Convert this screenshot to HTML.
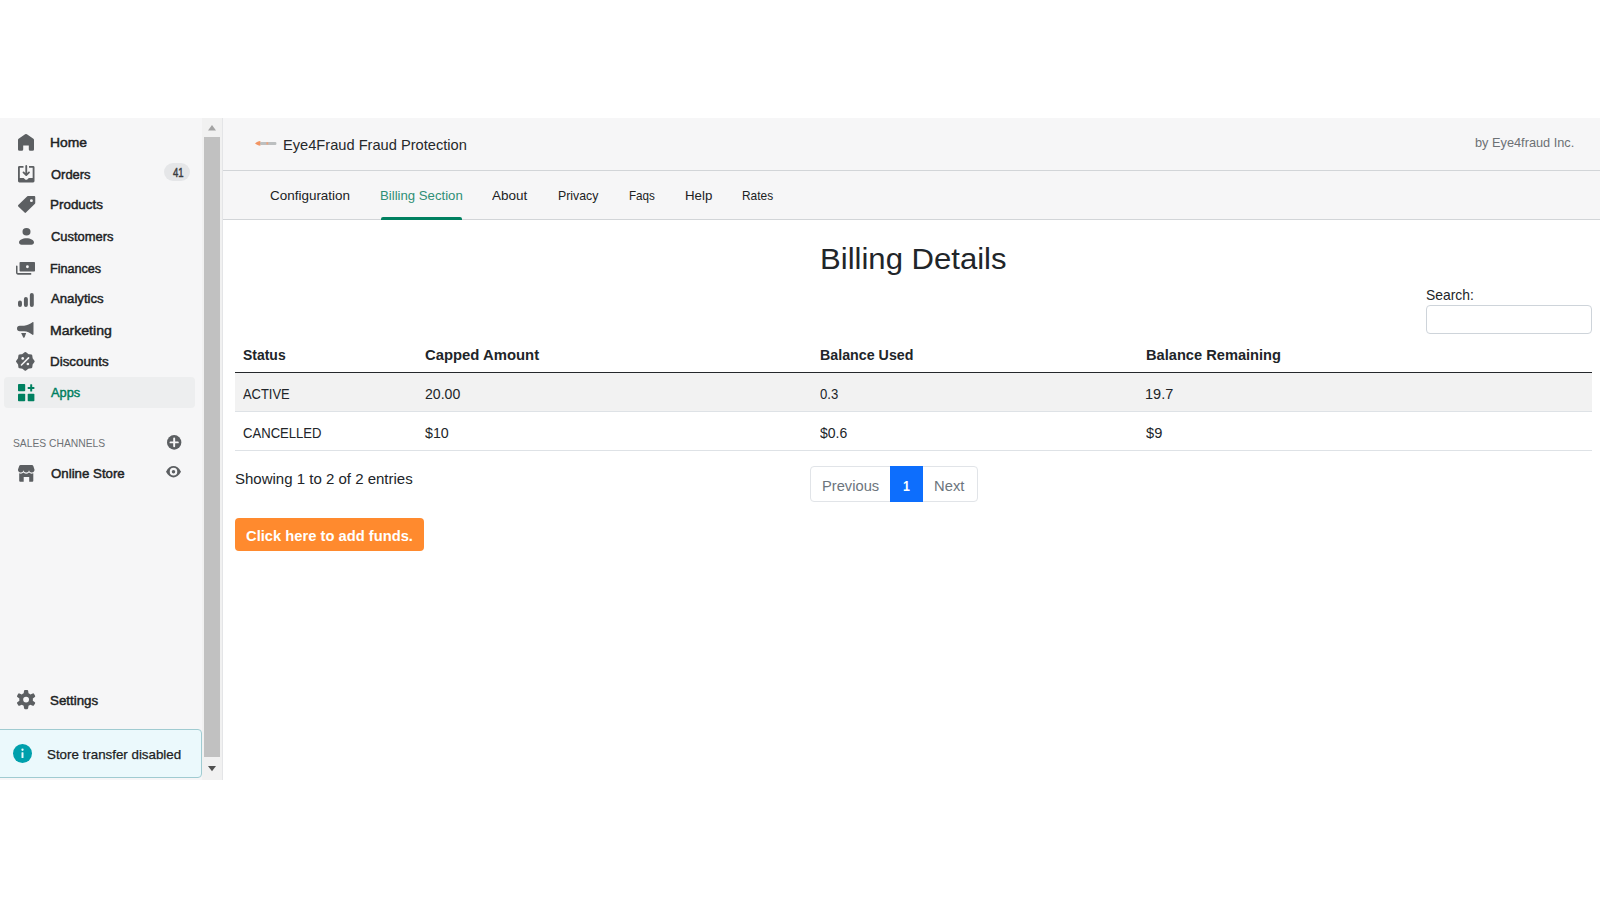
<!DOCTYPE html>
<html lang="en"><head><meta charset="utf-8"><title>Eye4Fraud Fraud Protection</title>
<style>
html,body{margin:0;padding:0;background:#fff;width:1600px;height:900px;overflow:hidden}
body{font-family:"Liberation Sans",sans-serif}
#app{position:relative;width:1600px;height:900px;overflow:hidden}
.t{position:absolute;white-space:nowrap;line-height:1;transform-origin:0 50%;font-family:"Liberation Sans",sans-serif}
.b{position:absolute;box-sizing:border-box}
svg{position:absolute;overflow:visible}

</style></head>
<body>
<div id="app">
<!-- app chrome backgrounds -->
<div class="b" style="left:0;top:118px;width:1600px;height:102px;background:#f6f6f7"></div>
<div class="b" style="left:0;top:118px;width:223px;height:662px;background:#f6f6f7"></div>
<!-- scrollbar -->
<div class="b" style="left:202px;top:118px;width:21px;height:662px;background:#f1f1f1"></div>
<div class="b" style="left:222px;top:118px;width:1px;height:662px;background:#e4e5e7"></div>
<div class="b" style="left:204.4px;top:137px;width:15.3px;height:620.2px;background:#c1c1c1"></div>
<svg style="left:208px;top:124.5px" width="8" height="5.5" viewBox="0 0 8 5.5"><path d="M4 0L8 5.5H0z" fill="#a3a3a3"/></svg>
<svg style="left:208.4px;top:765.5px" width="8" height="5.2" viewBox="0 0 8 5.2"><path d="M0 0H8L4 5.2z" fill="#505050"/></svg>
<!-- header dividers -->
<div class="b" style="left:223px;top:170px;width:1377px;height:1px;background:#d2d5d8"></div>
<div class="b" style="left:223px;top:219px;width:1377px;height:1px;background:#d2d5d8"></div>
<div class="b" style="left:380.6px;top:217.4px;width:81.4px;height:2.8px;background:#008060;border-radius:2px 2px 0 0"></div>
<!-- Apps highlight -->
<div class="b" style="left:4.3px;top:377.3px;width:190.7px;height:30.4px;background:#edeeef;border-radius:4px"></div>
<!-- Orders badge -->
<div class="b" style="left:164.2px;top:162.8px;width:26.3px;height:18.2px;background:#e5e6e8;border-radius:9.1px"></div>
<!-- banner -->
<div class="b" style="left:-4px;top:729px;width:206px;height:49px;background:#ebf9fc;border:1px solid #a0cbd1;border-radius:4px"></div>
<!-- search input -->
<div class="b" style="left:1426px;top:305px;width:166px;height:29px;background:#fff;border:1px solid #ced4da;border-radius:4px"></div>
<!-- table -->
<div class="b" style="left:235px;top:373px;width:1357px;height:38px;background:#f2f2f2"></div>
<div class="b" style="left:235px;top:371.6px;width:1357px;height:1.9px;background:#25282c"></div>
<div class="b" style="left:235px;top:411px;width:1357px;height:1px;background:#dee2e6"></div>
<div class="b" style="left:235px;top:450px;width:1357px;height:1px;background:#dee2e6"></div>
<!-- pagination -->
<div class="b" style="left:810px;top:466px;width:168px;height:36px;background:#fff;border:1px solid #e1e4e8;border-radius:4px"></div>
<div class="b" style="left:890px;top:466px;width:33px;height:36px;background:#0d6efd"></div>
<!-- button -->
<div class="b" style="left:235.2px;top:518px;width:188.8px;height:33.3px;background:#ff8a2e;border-radius:4px"></div>

<svg style="left:18.00px;top:133.75px" width="16.00" height="16.85" viewBox="2.000 1.000 16.000 18.000" preserveAspectRatio="none"><path fill="#5c5f62" d="M18 7.3V17.5A1.5 1.5 0 0 1 16.5 19H14.3A1.5 1.5 0 0 1 12.8 17.5V13.2H7.2V17.5A1.5 1.5 0 0 1 5.7 19H3.5A1.5 1.5 0 0 1 2 17.5V7.3A1.5 1.5 0 0 1 2.6 6.1L9.1 1.3A1.5 1.5 0 0 1 10.9 1.3L17.4 6.1A1.5 1.5 0 0 1 18 7.3Z"/></svg>
<svg style="left:17.50px;top:165.00px" width="16.50" height="17.50" viewBox="1.000 0.000 18.000 19.000" preserveAspectRatio="none"><path fill="#5c5f62" d="M11 1a1 1 0 1 0-2 0v7.586L7.707 7.293a1 1 0 0 0-1.414 1.414l3 3a1 1 0 0 0 1.414 0l3-3a1 1 0 0 0-1.414-1.414L11 8.586V1z"/><path fill="#5c5f62" d="M3 14V3h4V1H2.5A1.5 1.5 0 0 0 1 2.5v15A1.5 1.5 0 0 0 2.5 19h15a1.5 1.5 0 0 0 1.5-1.5v-15A1.5 1.5 0 0 0 17.500 1H13v2h4v11h-3.500c-.775 0-1.388.662-1.926 1.244l-.11.12A1.994 1.994 0 0 1 10 16a1.994 1.994 0 0 1-1.463-.637l-.111-.12C7.888 14.664 7.275 14 6.500 14H3z"/></svg>
<svg style="left:17.50px;top:196.25px" width="17.25" height="16.85" viewBox="0.000 1.000 18.000 18.000" preserveAspectRatio="none"><path fill="#5c5f62" fill-rule="evenodd" d="M10.408 1H17a1 1 0 0 1 1 1v6.592a1 1 0 0 1-.293.707l-9.408 9.408a1 1 0 0 1-1.414 0L.293 12.115a1 1 0 0 1 0-1.414L9.701 1.293A1 1 0 0 1 10.408 1zM14 7.500a1.500 1.500 0 1 0 0-3 1.500 1.500 0 0 0 0 3z"/></svg>
<svg style="left:18.50px;top:228.30px" width="15.00" height="16.70" viewBox="2.500 1.100 15.000 17.900" preserveAspectRatio="none"><path fill="#5c5f62" d="M14 5.100a4 4 0 1 1-8 0 4 4 0 0 1 8 0zM2.500 16.500C2.500 14 6 12 10 12s7.500 2 7.500 4.500c0 1.400-1 2.500-2.500 2.500H5c-1.500 0-2.500-1.100-2.500-2.500z"/></svg>
<svg style="left:16.25px;top:262.10px" width="19.00" height="12.65" viewBox="0.000 0.000 18.800 12.500" preserveAspectRatio="none"><path fill="#5c5f62" fill-rule="evenodd" d="M4.300 0H18a.8.8 0 0 1 .8.800V8.600a.8.8 0 0 1-.8.800H4.300a.8.800 0 0 1-.8-.8V.8A.8.800 0 0 1 4.300 0zM11.300 6.100a1.400 1.400 0 1 0 0-2.800 1.400 1.400 0 0 0 0 2.800z"/><path fill="none" stroke="#5c5f62" stroke-width="1.500" stroke-linecap="round" stroke-linejoin="round" d="M.75 4.300V10.750a1 1 0 0 0 1 1H14.500"/></svg>
<svg style="left:18.00px;top:292.50px" width="15.80" height="14.10" viewBox="0.000 0.000 16.000 14.000" preserveAspectRatio="none"><path fill="#5c5f62" d="M14 0a2 2 0 0 0-2 2v10a2 2 0 0 0 4 0V2a2 2 0 0 0-2-2zM8 4a2 2 0 0 0-2 2v6a2 2 0 0 0 4 0V6a2 2 0 0 0-2-2zM2 7.500a2 2 0 0 0-2 2V12a2 2 0 0 0 4 0V9.500a2 2 0 0 0-2-2z"/></svg>
<svg style="left:17.30px;top:322.30px" width="16.50" height="15.80" viewBox="-0.000 0.045 16.403 15.822" preserveAspectRatio="none"><path fill="#5c5f62" d="M0 6.500A2.800 2.800 0 0 1 2.800 3.700H7C10 3.500 13 2 15.400.200a.6.600 0 0 1 1 .500V12.300a.6.600 0 0 1-1 .500C13 11 10 9.600 7 9.400H2.800A2.800 2.800 0 0 1 0 6.600z"/><path fill="#5c5f62" d="M4.100 11.100H9.100L7.600 15.400a.8.800 0 0 1-1.400.100z"/></svg>
<svg style="left:16.30px;top:352.00px" width="18.70" height="18.70" viewBox="0.400 0.400 19.200 19.200" preserveAspectRatio="none"><polygon fill="#5c5f62" stroke="#5c5f62" stroke-width="2.4" stroke-linejoin="round" points="10.00,1.60 12.64,3.63 15.94,4.06 16.37,7.36 18.40,10.00 16.37,12.64 15.94,15.94 12.64,16.37 10.00,18.40 7.36,16.37 4.06,15.94 3.63,12.64 1.60,10.00 3.63,7.36 4.06,4.06 7.36,3.63"/><path stroke="#f6f6f7" stroke-width="1.600" stroke-linecap="round" d="M6 13.700L13.300 6.400"/><circle cx="7.300" cy="7" r="1.350" fill="#f6f6f7"/><circle cx="12.600" cy="12.700" r="1.350" fill="#f6f6f7"/></svg>
<svg style="left:17.50px;top:384.40px" width="16.40" height="17.20" viewBox="0.000 0.000 16.400 17.200" preserveAspectRatio="none"><rect x="0" y="0" width="7.200" height="7.200" rx=".8" fill="#008060"/><rect x="0" y="9.700" width="7.200" height="7.500" rx=".8" fill="#008060"/><rect x="9.700" y="9.700" width="6.700" height="7.500" rx=".8" fill="#008060"/><rect x="9.700" y="3" width="6.700" height="2" rx=".5" fill="#008060"/><rect x="12.200" y=".3" width="2" height="7.200" rx=".5" fill="#008060"/></svg>
<svg style="left:17.50px;top:464.75px" width="16.50" height="16.75" viewBox="-0.004 0.000 16.508 16.700" preserveAspectRatio="none"><path fill="#5c5f62" d="M2.600 0H13.900a1.500 1.500 0 0 1 1.400 1L16.500 4.500a2.750 2.750 0 0 1-5.500.3 2.750 2.750 0 0 1-5.500 0 2.750 2.750 0 0 1-5.500-.3L1.200 1A1.500 1.500 0 0 1 2.600 0z"/><path fill="#5c5f62" d="M1.200 8.300a4 4 0 0 0 4.300-.700 4.200 4.200 0 0 0 5.500 0 4 4 0 0 0 4.300.7V15.700a1 1 0 0 1-1 1H11.200V12H5.700v4.700H2.200a1 1 0 0 1-1-1z"/></svg>
<svg style="left:166.90px;top:435.00px" width="14.35" height="14.75" viewBox="0.000 0.000 14.800 14.800" preserveAspectRatio="none"><circle cx="7.400" cy="7.400" r="7.400" fill="#5c5f62"/><path stroke="#f6f6f7" stroke-width="2" stroke-linecap="round" d="M3.600 7.400H11.200M7.400 3.600V11.200"/></svg>
<svg style="left:166.30px;top:466.10px" width="15.00" height="11.40" viewBox="0.000 -0.000 14.800 11.000" preserveAspectRatio="none"><path fill="#5c5f62" fill-rule="evenodd" d="M0 5.500C2 1.600 4.800 0 7.400 0s5.400 1.600 7.400 5.500C12.800 9.400 10 11 7.400 11S2 9.400 0 5.500zM7.400 9.200a3.700 3.700 0 1 0 0-7.400 3.700 3.700 0 0 0 0 7.400z"/><circle cx="7.400" cy="5.500" r="1.700" fill="#5c5f62"/></svg>
<svg style="left:17.00px;top:690.00px" width="18.20" height="19.20" viewBox="0.800 0.000 18.721 20.000" preserveAspectRatio="none"><path fill="#5c5f62" fill-rule="evenodd" d="M9.027 0a1 1 0 0 0-.99.859l-.37 2.598A6.993 6.993 0 0 0 5.742 4.570l-2.437-.98a1 1 0 0 0-1.239.428L.934 5.981a1 1 0 0 0 .248 1.287l2.066 1.621a7.060 7.060 0 0 0 0 2.222l-2.066 1.621a1 1 0 0 0-.248 1.287l1.132 1.962a1 1 0 0 0 1.239.428l2.438-.979a6.995 6.995 0 0 0 1.923 1.113l.372 2.598a1 1 0 0 0 .99.859h2.265a1 1 0 0 0 .99-.859l.371-2.598a6.995 6.995 0 0 0 1.924-1.112l2.438.978a1 1 0 0 0 1.238-.428l1.133-1.962a1 1 0 0 0-.249-1.287l-2.065-1.621a7.063 7.063 0 0 0 0-2.222l2.065-1.621a1 1 0 0 0 .249-1.287l-1.133-1.962a1 1 0 0 0-1.239-.428l-2.437.979a6.994 6.994 0 0 0-1.924-1.113L12.283.860a1 1 0 0 0-.99-.859H9.027zM10.160 13a3 3 0 1 0 0-6 3 3 0 0 0 0 6z"/></svg>
<svg style="left:12.90px;top:744.30px" width="19.00" height="19.10" viewBox="0.000 0.000 19.000 19.000" preserveAspectRatio="none"><circle cx="9.500" cy="9.500" r="9.500" fill="#00a0ac"/><circle cx="9.500" cy="5.700" r="1.150" fill="#ebf9fc"/><rect x="8.500" y="8.200" width="2" height="5.800" rx=".6" fill="#ebf9fc"/></svg>
<svg style="left:254.80px;top:141.20px" width="21.40" height="4.80" viewBox="0.000 0.000 21.200 4.800" preserveAspectRatio="none"><path fill="#f29563" d="M0 2.400C1.500 1.200 3.500.300 5.300 0V4.800C3.500 4.500 1.500 3.600 0 2.400z"/><rect x="5" y="1.100" width="16.200" height="2.800" rx="1" fill="#a4a8a8" opacity=".7"/><rect x="11.300" y="1.300" width="1.800" height="2.200" fill="#f0a27a"/></svg>
<span class="t" style="left:49.55px;top:136px;font-size:13.2px;font-weight:400;color:#202223;-webkit-text-stroke:0.45px #202223;transform:scaleX(1.0519)">Home</span>
<span class="t" style="left:50.60px;top:168px;font-size:13.2px;font-weight:400;color:#202223;-webkit-text-stroke:0.45px #202223;transform:scaleX(0.9826)">Orders</span>
<span class="t" style="left:49.58px;top:198px;font-size:13.2px;font-weight:400;color:#202223;-webkit-text-stroke:0.45px #202223;transform:scaleX(1.0185)">Products</span>
<span class="t" style="left:50.60px;top:230px;font-size:13.2px;font-weight:400;color:#202223;-webkit-text-stroke:0.45px #202223;transform:scaleX(0.9803)">Customers</span>
<span class="t" style="left:49.64px;top:262px;font-size:13.2px;font-weight:400;color:#202223;-webkit-text-stroke:0.45px #202223;transform:scaleX(0.9562)">Finances</span>
<span class="t" style="left:50.60px;top:292px;font-size:13.2px;font-weight:400;color:#202223;-webkit-text-stroke:0.45px #202223;transform:scaleX(0.9986)">Analytics</span>
<span class="t" style="left:49.53px;top:324px;font-size:13.2px;font-weight:400;color:#202223;-webkit-text-stroke:0.45px #202223;transform:scaleX(1.0678)">Marketing</span>
<span class="t" style="left:49.59px;top:355px;font-size:13.2px;font-weight:400;color:#202223;-webkit-text-stroke:0.45px #202223;transform:scaleX(1.0138)">Discounts</span>
<span class="t" style="left:50.60px;top:386px;font-size:13.2px;font-weight:400;color:#007f5f;-webkit-text-stroke:0.45px #007f5f;transform:scaleX(0.9716)">Apps</span>
<span class="t" style="left:172.60px;top:167px;font-size:12.0px;font-weight:400;color:#3a3d40;-webkit-text-stroke:0.45px #3a3d40;transform:scaleX(0.7971)">41</span>
<span class="t" style="left:12.90px;top:438px;font-size:11.2px;font-weight:400;color:#6d7175;transform:scaleX(0.9213)">SALES CHANNELS</span>
<span class="t" style="left:50.60px;top:467px;font-size:13.2px;font-weight:400;color:#202223;-webkit-text-stroke:0.45px #202223;transform:scaleX(1.0059)">Online Store</span>
<span class="t" style="left:50.40px;top:694px;font-size:13.2px;font-weight:400;color:#202223;-webkit-text-stroke:0.45px #202223;transform:scaleX(1.0092)">Settings</span>
<span class="t" style="left:46.70px;top:748px;font-size:13.4px;font-weight:400;color:#202223;-webkit-text-stroke:0.25px #202223;transform:scaleX(0.9957)">Store transfer disabled</span>
<span class="t" style="left:283.21px;top:138px;font-size:14.8px;font-weight:400;color:#26292b;transform:scaleX(0.9889)">Eye4Fraud Fraud Protection</span>
<span class="t" style="left:1474.50px;top:136px;font-size:13.0px;font-weight:400;color:#6d7175;transform:scaleX(0.9815)">by Eye4fraud Inc.</span>
<span class="t" style="left:270.30px;top:189px;font-size:13.2px;font-weight:400;color:#202223;transform:scaleX(1.0204)">Configuration</span>
<span class="t" style="left:492.40px;top:189px;font-size:13.2px;font-weight:400;color:#202223;transform:scaleX(1.0230)">About</span>
<span class="t" style="left:557.67px;top:189px;font-size:13.2px;font-weight:400;color:#202223;transform:scaleX(0.9334)">Privacy</span>
<span class="t" style="left:628.72px;top:189px;font-size:13.2px;font-weight:400;color:#202223;transform:scaleX(0.8843)">Faqs</span>
<span class="t" style="left:684.99px;top:189px;font-size:13.2px;font-weight:400;color:#202223;transform:scaleX(1.0082)">Help</span>
<span class="t" style="left:742.10px;top:189px;font-size:13.2px;font-weight:400;color:#202223;transform:scaleX(0.9038)">Rates</span>
<span class="t" style="left:379.60px;top:189px;font-size:13.2px;font-weight:400;color:#2f8f76;transform:scaleX(0.9988)">Billing Section</span>
<span class="t" style="left:820.41px;top:244px;font-size:29.8px;font-weight:400;color:#212529;transform:scaleX(1.0429)">Billing Details</span>
<span class="t" style="left:1426.25px;top:288px;font-size:14.8px;font-weight:400;color:#212529;transform:scaleX(0.9372)">Search:</span>
<span class="t" style="left:242.75px;top:348px;font-size:14.7px;font-weight:700;color:#212529;transform:scaleX(0.9504)">Status</span>
<span class="t" style="left:424.75px;top:348px;font-size:14.7px;font-weight:700;color:#212529;transform:scaleX(1.0108)">Capped Amount</span>
<span class="t" style="left:820.00px;top:348px;font-size:14.7px;font-weight:700;color:#212529;transform:scaleX(0.9700)">Balance Used</span>
<span class="t" style="left:1146.00px;top:348px;font-size:14.7px;font-weight:700;color:#212529;transform:scaleX(0.9961)">Balance Remaining</span>
<span class="t" style="left:242.75px;top:387px;font-size:14.9px;font-weight:400;color:#212529;transform:scaleX(0.8681)">ACTIVE</span>
<span class="t" style="left:424.75px;top:387px;font-size:14.9px;font-weight:400;color:#212529;transform:scaleX(0.9464)">20.00</span>
<span class="t" style="left:820.00px;top:387px;font-size:14.9px;font-weight:400;color:#212529;transform:scaleX(0.8816)">0.3</span>
<span class="t" style="left:1145.03px;top:387px;font-size:14.9px;font-weight:400;color:#212529;transform:scaleX(0.9747)">19.7</span>
<span class="t" style="left:242.75px;top:426px;font-size:14.9px;font-weight:400;color:#212529;transform:scaleX(0.8787)">CANCELLED</span>
<span class="t" style="left:424.75px;top:426px;font-size:14.9px;font-weight:400;color:#212529;transform:scaleX(0.9567)">$10</span>
<span class="t" style="left:820.00px;top:426px;font-size:14.9px;font-weight:400;color:#212529;transform:scaleX(0.9408)">$0.6</span>
<span class="t" style="left:1146.00px;top:426px;font-size:14.9px;font-weight:400;color:#212529;transform:scaleX(0.9827)">$9</span>
<span class="t" style="left:234.75px;top:471px;font-size:15.4px;font-weight:400;color:#212529;transform:scaleX(0.9751)">Showing 1 to 2 of 2 entries</span>
<span class="t" style="left:821.52px;top:478px;font-size:15.0px;font-weight:400;color:#6c757d;transform:scaleX(0.9796)">Previous</span>
<span class="t" style="left:902.60px;top:478px;font-size:15.0px;font-weight:700;color:#ffffff;transform:scaleX(0.8250)">1</span>
<span class="t" style="left:934.02px;top:478px;font-size:15.0px;font-weight:400;color:#6c757d;transform:scaleX(0.9845)">Next</span>
<span class="t" style="left:246.00px;top:528px;font-size:15.0px;font-weight:700;color:#ffffff;transform:scaleX(0.9817)">Click here to add funds.</span>
</div>
</body></html>
